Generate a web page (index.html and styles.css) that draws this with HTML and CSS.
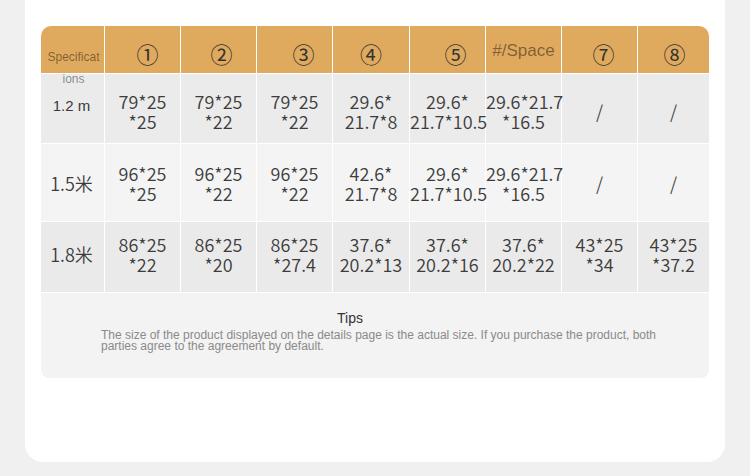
FILE: index.html
```html
<!DOCTYPE html>
<html lang="en">
<head>
<meta charset="utf-8">
<title>Specifications</title>
<link rel="stylesheet" href="styles.css">
</head>
<body>
<div class="card">
  <table class="spec">
    <colgroup>
      <col class="c-first">
      <col class="c-std">
      <col class="c-std">
      <col class="c-std">
      <col class="c-wide">
      <col class="c-std">
      <col class="c-std">
      <col class="c-std">
      <col class="c-last">
    </colgroup>
    <thead>
      <tr class="head">
        <th class="h-label"><div class="label-wrap"><span class="label">Specifications</span></div></th>
        <th class="h-num s5">①</th>
        <th class="h-num s3">②</th>
        <th class="h-num s9">③</th>
        <th class="h-num">④</th>
        <th class="h-num s8">⑤</th>
        <th class="h-space">#/Space</th>
        <th class="h-num s4">⑦</th>
        <th class="h-num s1">⑧</th>
      </tr>
    </thead>
    <tbody>
      <tr class="row r1">
        <td class="size latin">1.2 m</td>
        <td>79*25<br>*25</td>
        <td>79*25<br>*22</td>
        <td>79*25<br>*22</td>
        <td>29.6*<br>21.7*8</td>
        <td>29.6*<br>21.7*10.5</td>
        <td>29.6*21.7<br>*16.5</td>
        <td class="slash">/</td>
        <td class="slash">/</td>
      </tr>
      <tr class="row r2">
        <td class="size">1.5米</td>
        <td>96*25<br>*25</td>
        <td>96*25<br>*22</td>
        <td>96*25<br>*22</td>
        <td>42.6*<br>21.7*8</td>
        <td>29.6*<br>21.7*10.5</td>
        <td>29.6*21.7<br>*16.5</td>
        <td class="slash">/</td>
        <td class="slash">/</td>
      </tr>
      <tr class="row r3">
        <td class="size">1.8米</td>
        <td>86*25<br>*22</td>
        <td>86*25<br>*20</td>
        <td>86*25<br>*27.4</td>
        <td>37.6*<br>20.2*13</td>
        <td>37.6*<br>20.2*16</td>
        <td>37.6*<br>20.2*22</td>
        <td>43*25<br>*34</td>
        <td>43*25<br>*37.2</td>
      </tr>
      <tr class="tips-row">
        <td class="tips" colspan="9">
          <div class="tips-title">Tips</div>
          <p class="tips-text">The size of the product displayed on the details page is the actual size. If you purchase the product, both parties agree to the agreement by default.</p>
        </td>
      </tr>
    </tbody>
  </table>
</div>
</body>
</html>
```

FILE: styles.css
```css
html, body {
  margin: 0;
  padding: 0;
  background: #f0f0f0;
}

body {
  width: 750px;
  height: 476px;
  overflow: hidden;
}

.card {
  margin: 0 25px;
  height: 437px;
  padding: 25px 15px 0;
  background: #ffffff;
  border-radius: 0 0 18px 18px;
}

.spec {
  table-layout: fixed;
  width: 670px;
  border-collapse: separate;
  border-spacing: 1px;
  font-family: "Noto Sans CJK SC", "Noto Sans", sans-serif;
  color: #3c3c3c;
}

.c-first { width: 63px; }
.c-std { width: 75px; }
.c-wide { width: 76px; }
.c-last { width: 71px; }

tr.head { height: 47px; }
tr.r1 { height: 69px; }
tr.r2 { height: 77px; }
tr.r3 { height: 70px; }
tr.tips-row { height: 85px; }

.head th {
  padding: 0;
  background: #e0aa5e;
  font-weight: normal;
  text-align: center;
}

.h-label {
  border-top-left-radius: 10px;
  vertical-align: top;
  text-align: left;
}

.label-wrap {
  height: 20px;
  padding: 20px 4px 0 6px;
  position: relative;
  z-index: 1;
}

.label {
  display: block;
  font-family: "Liberation Sans", Arial, sans-serif;
  font-size: 12px;
  line-height: 22px;
  color: rgba(0, 0, 0, 0.45);
  word-break: break-all;
}

.h-num {
  vertical-align: middle;
  font-size: 22px;
  line-height: 20px;
  color: #333;
  padding-top: 7px !important;
}

.h-num.s1 { padding-left: 2px !important; }
.h-num.s3 { padding-left: 6px !important; }
.h-num.s4 { padding-left: 8px !important; }
.h-num.s5 { padding-left: 10px !important; }
.h-num.s8 { padding-left: 16px !important; }
.h-num.s9 { padding-left: 18px !important; }

.h-num:last-child {
  border-top-right-radius: 10px;
}

.h-space {
  font-family: "Liberation Sans", Arial, sans-serif;
  font-size: 17px;
  color: rgba(0, 0, 0, 0.45);
  vertical-align: middle;
  padding-top: 3px !important;
}

.row td {
  padding: 0;
  text-align: center;
  vertical-align: middle;
  font-size: 18px;
  font-weight: 350;
  line-height: 20px;
  white-space: nowrap;
}

.r1 td {
  padding-top: 4px;
  background: #ebebeb;
}

.r2 td {
  background: #f4f4f4;
}

.r3 td {
  padding-bottom: 6px;
  background: #ebeaea;
}

.size {
  padding-right: 2px !important;
}

.r1 .size.latin {
  font-family: "Liberation Sans", Arial, sans-serif;
  font-size: 15px;
  font-weight: normal;
  color: #3a3a3a;
  padding: 0 5px 6px 0;
}

.slash {
  color: #444;
}

.tips {
  padding: 17px 0 0 60px;
  vertical-align: top;
  background: #f3f3f3;
  border-radius: 0 0 8px 8px;
  font-family: "Liberation Sans", Arial, sans-serif;
}

.tips-title {
  width: 498px;
  text-align: center;
  font-size: 14px;
  line-height: 16px;
  color: #333;
}

.tips-text {
  width: 560px;
  margin: 4px 0 0;
  font-size: 12px;
  line-height: 10.5px;
  color: #8a8a8a;
}
```
